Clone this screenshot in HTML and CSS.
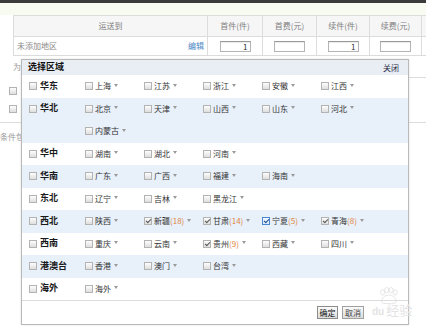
FILE: index.html
```html
<!DOCTYPE html>
<html lang="zh-CN">
<head>
<meta charset="utf-8">
<title>选择区域</title>
<link rel="stylesheet" href="styles.css">
</head>
<body>
<div class="page">
  <div class="topbar"></div>
  <div class="band"></div>

  <div class="fee">
    <div class="h">运送到</div>
    <div class="h">首件(件)</div>
    <div class="h">首费(元)</div>
    <div class="h">续件(件)</div>
    <div class="h">续费(元)</div>
    <div class="h"></div>
    <div class="d area"><span class="none">未添加地区</span><a class="edit">编辑</a></div>
    <div class="d"><span class="inp">1</span></div>
    <div class="d"><span class="inp"></span></div>
    <div class="d"><span class="inp">1</span></div>
    <div class="d"><span class="inp"></span></div>
    <div class="d"></div>
  </div>

  <div class="below">
    <div class="lside">
      <div class="r1"><span class="wei">为</span></div>
      <div class="r2">
        <div class="lchk"><span class="cb"></span><span class="dash">-</span></div>
        <div class="lchk"><span class="cb"></span><span class="dash">-</span></div>
      </div>
      <div class="r3">条件包</div>
    </div>
    <div class="mid"></div>
    <div class="rside">
      <div class="r1 line"></div>
      <div class="r2 line"></div>
    </div>
  </div>

  <div class="dialog">
    <div class="dtitle"><span class="dt">选择区域</span><a class="close">关闭</a></div>
    <div class="rows">
      <div class="row">
        <div class="grp"><span class="cb"></span><span class="gl">华东</span></div>
        <div class="provs">
          <span class="it"><span class="cb"></span>上海<b class="tri"></b></span>
          <span class="it"><span class="cb"></span>江苏<b class="tri"></b></span>
          <span class="it"><span class="cb"></span>浙江<b class="tri"></b></span>
          <span class="it"><span class="cb"></span>安徽<b class="tri"></b></span>
          <span class="it"><span class="cb"></span>江西<b class="tri"></b></span>
        </div>
      </div>
      <div class="row alt">
        <div class="grp"><span class="cb"></span><span class="gl">华北</span></div>
        <div class="provs">
          <span class="it"><span class="cb"></span>北京<b class="tri"></b></span>
          <span class="it"><span class="cb"></span>天津<b class="tri"></b></span>
          <span class="it"><span class="cb"></span>山西<b class="tri"></b></span>
          <span class="it"><span class="cb"></span>山东<b class="tri"></b></span>
          <span class="it"><span class="cb"></span>河北<b class="tri"></b></span>
          <span class="it"><span class="cb"></span>内蒙古<b class="tri"></b></span>
        </div>
      </div>
      <div class="row">
        <div class="grp"><span class="cb"></span><span class="gl">华中</span></div>
        <div class="provs">
          <span class="it"><span class="cb"></span>湖南<b class="tri"></b></span>
          <span class="it"><span class="cb"></span>湖北<b class="tri"></b></span>
          <span class="it"><span class="cb"></span>河南<b class="tri"></b></span>
        </div>
      </div>
      <div class="row alt">
        <div class="grp"><span class="cb"></span><span class="gl">华南</span></div>
        <div class="provs">
          <span class="it"><span class="cb"></span>广东<b class="tri"></b></span>
          <span class="it"><span class="cb"></span>广西<b class="tri"></b></span>
          <span class="it"><span class="cb"></span>福建<b class="tri"></b></span>
          <span class="it"><span class="cb"></span>海南<b class="tri"></b></span>
        </div>
      </div>
      <div class="row">
        <div class="grp"><span class="cb"></span><span class="gl">东北</span></div>
        <div class="provs">
          <span class="it"><span class="cb"></span>辽宁<b class="tri"></b></span>
          <span class="it"><span class="cb"></span>吉林<b class="tri"></b></span>
          <span class="it"><span class="cb"></span>黑龙江<b class="tri"></b></span>
        </div>
      </div>
      <div class="row alt">
        <div class="grp"><span class="cb"></span><span class="gl">西北</span></div>
        <div class="provs">
          <span class="it"><span class="cb"></span>陕西<b class="tri"></b></span>
          <span class="it"><span class="cb on"></span>新疆<em>(18)</em><b class="tri"></b></span>
          <span class="it"><span class="cb on"></span>甘肃<em>(14)</em><b class="tri"></b></span>
          <span class="it"><span class="cb on focus"></span>宁夏<em>(5)</em><b class="tri"></b></span>
          <span class="it"><span class="cb on"></span>青海<em>(8)</em><b class="tri"></b></span>
        </div>
      </div>
      <div class="row">
        <div class="grp"><span class="cb"></span><span class="gl">西南</span></div>
        <div class="provs">
          <span class="it"><span class="cb"></span>重庆<b class="tri"></b></span>
          <span class="it"><span class="cb"></span>云南<b class="tri"></b></span>
          <span class="it"><span class="cb on"></span>贵州<em>(9)</em><b class="tri"></b></span>
          <span class="it"><span class="cb"></span>西藏<b class="tri"></b></span>
          <span class="it"><span class="cb"></span>四川<b class="tri"></b></span>
        </div>
      </div>
      <div class="row alt">
        <div class="grp"><span class="cb"></span><span class="gl">港澳台</span></div>
        <div class="provs">
          <span class="it"><span class="cb"></span>香港<b class="tri"></b></span>
          <span class="it"><span class="cb"></span>澳门<b class="tri"></b></span>
          <span class="it"><span class="cb"></span>台湾<b class="tri"></b></span>
        </div>
      </div>
      <div class="row">
        <div class="grp"><span class="cb"></span><span class="gl">海外</span></div>
        <div class="provs">
          <span class="it"><span class="cb"></span>海外<b class="tri"></b></span>
        </div>
      </div>
    </div>
    <div class="dfoot">
      <button class="btn">确定</button>
      <button class="btn cancel">取消</button>
    </div>
  </div>

  <div class="wm">
    <svg class="paw" width="20" height="18" viewBox="0 0 22 20">
      <ellipse cx="5" cy="6" rx="2.2" ry="3" fill="none" stroke="#e2e2e2" stroke-width="1"/>
      <ellipse cx="9.5" cy="3.5" rx="2.2" ry="3" fill="none" stroke="#e2e2e2" stroke-width="1"/>
      <ellipse cx="14.5" cy="3.5" rx="2.2" ry="3" fill="none" stroke="#e2e2e2" stroke-width="1"/>
      <ellipse cx="19" cy="6" rx="2.2" ry="3" fill="none" stroke="#e2e2e2" stroke-width="1"/>
      <path d="M4 17 C4 11 8 9 12 9 C16 9 20 11 20 17 C20 19 4 19 4 17 Z" fill="none" stroke="#e2e2e2" stroke-width="1"/>
    </svg>
    <span class="wmt"><span class="du">du</span>经验</span>
  </div>
</div>
</body>
</html>
```

FILE: styles.css
```css
* { box-sizing: border-box; margin: 0; padding: 0; }
html, body { width: 426px; height: 326px; overflow: hidden; background: #fff; }
body {
  font-family: "Noto Sans CJK SC", "Noto Sans", sans-serif;
  font-size: 8px;
  color: #333;
  line-height: 1.2;
}
.page { position: relative; width: 426px; height: 326px; overflow: hidden; }
.topbar { height: 3px; background: #3b3b3b; }
.band { height: 12px; background: #f7fbf2; }

/* fee table */
.fee {
  display: grid;
  grid-template-columns: 194px 55px 54px 53px 52px 40px;
  width: max-content;
  margin-left: 13px;
  border-top: 1px solid #dcdcdc;
  border-left: 1px solid #dcdcdc;
}
.fee .h, .fee .d {
  border-right: 1px solid #dcdcdc;
  border-bottom: 1px solid #dcdcdc;
  display: flex;
  align-items: center;
  justify-content: center;
  color: #808080;
}
.fee .h { height: 21px; background: #f6f6f6; }
.fee .d { height: 19px; background: #fff; }
.fee .area { justify-content: space-between; padding: 0 3px 0 3px; }
.none { color: #8a8a8a; }
.edit { color: #4f87c4; }
.inp {
  width: 31px;
  height: 11px;
  border: 1px solid #b4b4b4;
  border-top-color: #999;
  background: #fff;
  box-shadow: inset 0 1px 1px rgba(0,0,0,0.08);
  color: #333;
  font-size: 8px;
  line-height: 9px;
  text-align: right;
  padding-right: 2px;
}

/* content under the table */
.below { display: flex; }
.lside { width: 21px; flex: none; }
.mid { flex: 1; }
.rside { width: 18px; flex: none; }
.r1 { height: 22px; display: flex; align-items: center; padding-left: 13px; }
.r2 { height: 45px; border-bottom: 1px solid #dddddd; padding-top: 9px; }
.rside .r1 { padding: 0; border-bottom: 1px solid #dddddd; }
.rside .r2 { padding: 0; }
.wei { color: #999; }
.lchk { display: flex; align-items: center; height: 8px; margin-bottom: 10px; padding-left: 9px; }
.dash { color: #aaa; margin-left: 2px; font-size: 7px; }
.r3 { padding-top: 9px; color: #9a9a9a; white-space: nowrap; }

/* dialog */
.dialog {
  position: absolute;
  left: 21px;
  top: 59px;
  width: 388px;
  height: 266px;
  border: 1px solid #b9b9b9;
  background: #fff;
  box-shadow: 0 0 2px rgba(0,0,0,0.12);
  display: flex;
  flex-direction: column;
}
.dtitle {
  height: 15px;
  flex: none;
  background: #e9eef4;
  display: flex;
  align-items: center;
  justify-content: space-between;
  padding: 0 9px 0 6px;
}
.dt { font-weight: bold; font-size: 9px; color: #111; }
.close { color: #1f2a44; font-size: 8px; }
.rows { flex: none; }
.row { display: flex; background: #fff; }
.row.alt { background: #e8f0fa; }
.grp {
  width: 63px;
  flex: none;
  height: 22.5px;
  padding-left: 7px;
  display: flex;
  align-items: center;
}
.gl { font-weight: bold; font-size: 9px; color: #1a1a1a; margin-left: 3px; }
.provs { width: 295px; display: flex; flex-wrap: wrap; }
.it {
  width: 59px;
  height: 22.5px;
  display: flex;
  align-items: center;
  color: #333;
  white-space: nowrap;
}
.it em { font-style: normal; color: #e0853f; }
.tri {
  width: 0;
  height: 0;
  border-left: 2px solid transparent;
  border-right: 2px solid transparent;
  border-top: 3px solid #9a9a9a;
  margin-left: 3px;
  margin-bottom: 2px;
}
.cb {
  width: 8px;
  height: 8px;
  flex: none;
  border: 1px solid #b3b3b3;
  background: linear-gradient(#fdfdfd, #dedede);
  margin-right: 2px;
  display: inline-flex;
  align-items: center;
  justify-content: center;
}
.grp .cb { margin-right: 0; }
.cb.on::after {
  content: "";
  width: 2px;
  height: 4px;
  border-right: 1px solid #555;
  border-bottom: 1px solid #555;
  transform: rotate(45deg);
  margin-top: -1px;
}
.cb.focus { border-color: #4a87d6; background: linear-gradient(#f4f9ff, #d9e7f7); }
.cb.focus::after { border-color: #1f4f8f; }

.dfoot {
  flex: 1;
  border-top: 1px solid #dcdcdc;
  display: flex;
  justify-content: flex-end;
  align-items: center;
  gap: 4px;
  padding: 0 44px 0 0;
}
.btn {
  width: 21px;
  height: 13px;
  border: 1px solid #8c8c8c;
  background: linear-gradient(#fbfbfb, #dcdcdc);
  font-family: inherit;
  font-size: 8px;
  color: #111;
  line-height: 11px;
  display: flex;
  align-items: center;
  justify-content: center;
  padding: 0;
}
.btn.cancel {
  width: 22px;
  color: #444;
  border-color: #a0a0a0;
}

/* watermark */
.wm {
  position: absolute;
  left: 372px;
  top: 287px;
  display: flex;
  flex-direction: column;
  align-items: flex-start;
  pointer-events: none;
}
.paw { margin-left: 6px; }
.wmt { font-size: 13px; color: #e4e4e4; line-height: 14px; margin-top: -2px; }
.du { font-family: "Liberation Sans", sans-serif; font-weight: bold; font-size: 10px; margin-right: 2px; }
```
